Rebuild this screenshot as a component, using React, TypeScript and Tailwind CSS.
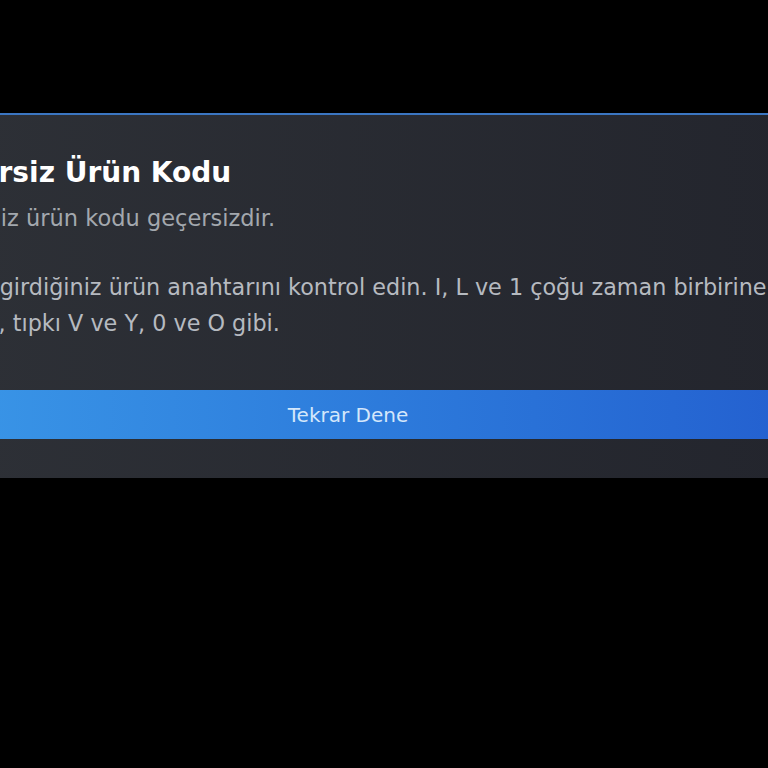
import React from 'react'

const font = { fontFamily: '"DejaVu Sans", "Noto Sans", Arial, sans-serif' }

export default function App() {
  return (
    <div className="w-screen h-screen bg-black overflow-hidden pt-[113px]" style={font}>
      <div className="ml-[-102px] w-[900px] border-t-2 border-[#3b76c2] bg-gradient-to-r from-[#2e3137] to-[#23252d] pt-[40px] pb-[39px] px-[20px]">
        <div className="whitespace-nowrap">
          <h1 className="ml-[3px] text-[28px] leading-[36px] font-bold text-white">Geçersiz Ürün Kodu</h1>
          <p className="mt-[13px] -ml-[5px] text-[22.5px] leading-[28px] text-[#a3a8ae]">Girdiğiniz ürün kodu geçersizdir.</p>
          <div className="mt-[37px] pl-[4px] text-[22.3px] leading-[36px] text-[#b6bac0]">
            <p>Lütfen girdiğiniz ürün anahtarını kontrol edin. I, L ve 1 çoğu zaman birbirine</p>
            <p>benzer, tıpkı V ve Y, 0 ve O gibi.</p>
          </div>
        </div>
        <button className="mt-[49px] w-full h-[49px] bg-gradient-to-r from-[#3b98e8] to-[#2461d0] text-[20px] text-[#d4e7fb]">
          Tekrar Dene
        </button>
      </div>
    </div>
  )
}
